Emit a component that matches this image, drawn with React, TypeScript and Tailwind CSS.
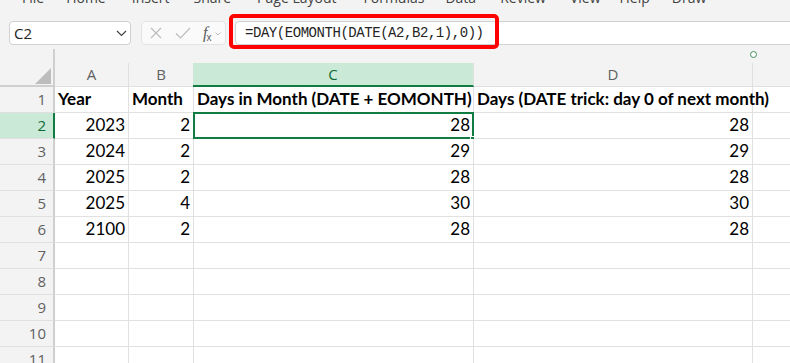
import React from "react";

const cellFont = { fontFamily: "Lato, 'Liberation Sans', sans-serif" };

type Row = { n: number; a?: string; b?: string; c?: string; d?: string; bold?: boolean };

const rows: Row[] = [
  { n: 1, a: "Year", b: "Month", c: "Days in Month (DATE + EOMONTH)", d: "Days (DATE trick: day 0 of next month)", bold: true },
  { n: 2, a: "2023", b: "2", c: "28", d: "28" },
  { n: 3, a: "2024", b: "2", c: "29", d: "29" },
  { n: 4, a: "2025", b: "2", c: "28", d: "28" },
  { n: 5, a: "2025", b: "4", c: "30", d: "30" },
  { n: 6, a: "2100", b: "2", c: "28", d: "28" },
  { n: 7 },
  { n: 8 },
  { n: 9 },
  { n: 10 },
  { n: 11 },
];

const tabs = [
  ["File", 22],
  ["Home", 63],
  ["Insert", 124],
  ["Share", 181],
  ["Page Layout", 241],
  ["Formulas", 340],
  ["Data", 419],
  ["Review", 471],
  ["View", 540],
  ["Help", 590],
  ["Draw", 641],
] as const;

function Cell({ text, bold, left, children }: { text?: string; bold?: boolean; left?: boolean; children?: React.ReactNode }) {
  return (
    <div
      className={`relative h-[26px] border-r border-b border-[#e1e1e1] bg-white flex items-end pb-[3px] text-[17px] leading-[20px] text-black whitespace-nowrap ${
        left ? "justify-start pl-[3px]" : "justify-end pr-[3px]"
      } ${bold ? "font-bold" : ""}`}
      style={cellFont}
    >
      {text}
      {children}
    </div>
  );
}

export default function App() {
  return (
    <div className="w-[790px] h-[363px] overflow-hidden bg-[#f3f3f3] flex flex-col" style={{ fontFamily: "'Open Sans', 'Noto Sans', sans-serif" }}>
      {/* Ribbon tabs (cut) */}
      <div className="relative h-[14px] overflow-hidden shrink-0">
        <div className="flex -mt-[9px] text-[14px] leading-[14px] text-[#424242]">
          {tabs.map(([t, x], i) => (
            <span key={t} className="whitespace-nowrap" style={{ marginLeft: i === 0 ? x : x - (tabs[i - 1][1] as number) - widthOf(tabs[i - 1][0]) }}>
              {t}
            </span>
          ))}
        </div>
      </div>

      {/* Formula bar */}
      <div className="relative h-[35px] shrink-0 flex items-start pt-[7px] pl-[9px]">
        <div className="w-[122px] h-[24px] bg-white border border-[#d1d1d1] rounded-[4px] flex items-center justify-between pl-[4px] pr-[3px] text-[15px] text-[#242424]">
          <span>C2</span>
          <svg width="11" height="7" viewBox="0 0 11 7" className="mt-[1px]">
            <path d="M1 1 L5.5 5.5 L10 1" fill="none" stroke="#424242" strokeWidth="1.2" />
          </svg>
        </div>
        <div className="ml-[10px] w-[85px] h-[24px] bg-[#fafafa] border border-[#e3e3e3] rounded-[4px] flex items-center pl-[8px]">
          <svg width="12" height="12" viewBox="0 0 12 12">
            <path d="M1 1 L11 11 M11 1 L1 11" stroke="#bdbdbd" strokeWidth="1.2" fill="none" />
          </svg>
          <svg width="16" height="12" viewBox="0 0 16 12" className="ml-[13px]">
            <path d="M1 6.5 L5.5 11 L15 1" stroke="#bdbdbd" strokeWidth="1.2" fill="none" />
          </svg>
          <span className="ml-[12px] flex items-end text-[#5c5c5c] leading-none">
            <span className="italic text-[16px]" style={{ fontFamily: "'Liberation Serif', serif" }}>f</span>
            <span className="text-[10px] -ml-[1px] mb-[-2px]" style={{ fontFamily: "'Liberation Sans', sans-serif" }}>x</span>
          </span>
          <svg width="6" height="4" viewBox="0 0 6 4" className="ml-[4px] mt-[2px]">
            <path d="M0.5 0.5 L3 3 L5.5 0.5" stroke="#bdbdbd" strokeWidth="1" fill="none" />
          </svg>
        </div>
        <div className="ml-[9px] flex-1 -mr-[6px] h-[24px] bg-white border border-[#d1d1d1] rounded-[4px] flex items-center pl-[9px] text-[14px] text-[#242424] tracking-[-0.45px]" style={{ fontFamily: "'Liberation Mono', 'DejaVu Sans Mono', monospace" }}>
          =DAY(EOMONTH(DATE(A2,B2,1),0))
        </div>
        {/* Red annotation box */}
        <div className="absolute left-[229px] top-0 w-[270px] h-[35px] border-[4px] border-[#ff0000] rounded-[5px] pointer-events-none" />
      </div>

      {/* spacer above headers */}
      <div className="relative h-[14px] shrink-0 flex">
        <div className="w-[55px] h-full border-r-2 border-[#cfcfcf]" />
        <div className="absolute left-[750px] top-[2px] w-[7px] h-[7px] rounded-full border-[1.5px] border-[#3d8f5e] bg-white" />
      </div>

      {/* Grid */}
      <div className="grid shrink-0" style={{ gridTemplateColumns: "55px 74px 65px 280px 279px 1fr" }}>
        {/* Header row */}
        <div className="relative h-[24px] bg-[#f3f3f3] border-r-2 border-b-2 border-[#cfcfcf]">
          <svg width="16" height="16" viewBox="0 0 16 16" className="absolute right-[2px] bottom-[1px]">
            <path d="M16 0 L16 16 L0 16 Z" fill="#bdbdbd" />
          </svg>
        </div>
        {["A", "B"].map((l) => (
          <div key={l} className="h-[24px] bg-[#f3f3f3] border-r border-b border-[#e0e0e0] flex items-center justify-center text-[15px] text-[#616161]">
            {l}
          </div>
        ))}
        <div className="h-[24px] bg-[#cbe9d7] border-r border-[#e0e0e0] border-b-2 border-b-[#107c41] flex items-center justify-center text-[15px] text-[#0e6b38] -ml-[1px]">
          C
        </div>
        <div className="h-[24px] bg-[#f3f3f3] border-r border-b border-[#e0e0e0] flex items-center justify-center text-[15px] text-[#616161]">
          D
        </div>
        <div className="h-[24px] bg-[#f3f3f3] border-b border-[#e0e0e0]" />

        {rows.map((r) => {
          const sel = r.n === 2;
          return (
            <React.Fragment key={r.n}>
              <div
                className={`h-[26px] border-r-2 border-b flex items-center justify-end pr-[7px] text-[15px] ${
                  sel ? "bg-[#cbe9d7] border-r-[#107c41] border-b-[#e0e0e0] text-[#0e6b38]" : "bg-[#f3f3f3] border-r-[#cfcfcf] border-b-[#e0e0e0] text-[#616161]"
                }`}
              >
                {r.n}
              </div>
              <Cell text={r.a} bold={r.bold} left={r.bold} />
              <Cell text={r.b} bold={r.bold} left={r.bold} />
              <Cell text={r.c} bold={r.bold} left={r.bold}>
                {sel && (
                  <>
                    <div className="absolute -left-[1px] -top-[1px] -right-[1px] -bottom-[1px] border-2 border-[#107c41] pointer-events-none" />
                    <div className="absolute -right-[4px] -bottom-[5px] w-[7px] h-[7px] bg-[#107c41] border border-white" />
                  </>
                )}
              </Cell>
              <Cell text={r.d} bold={r.bold} left={r.bold} />
              <div className="h-[26px] border-b border-[#e1e1e1] bg-white" />
            </React.Fragment>
          );
        })}
      </div>
    </div>
  );
}

function widthOf(t: string): number {
  const w: Record<string, number> = {
    File: 19,
    Home: 35,
    Insert: 33,
    Share: 34,
    "Page Layout": 72,
    Formulas: 58,
    Data: 28,
    Review: 45,
    View: 31,
    Help: 29,
    Draw: 34,
  };
  return w[t] ?? 30;
}
